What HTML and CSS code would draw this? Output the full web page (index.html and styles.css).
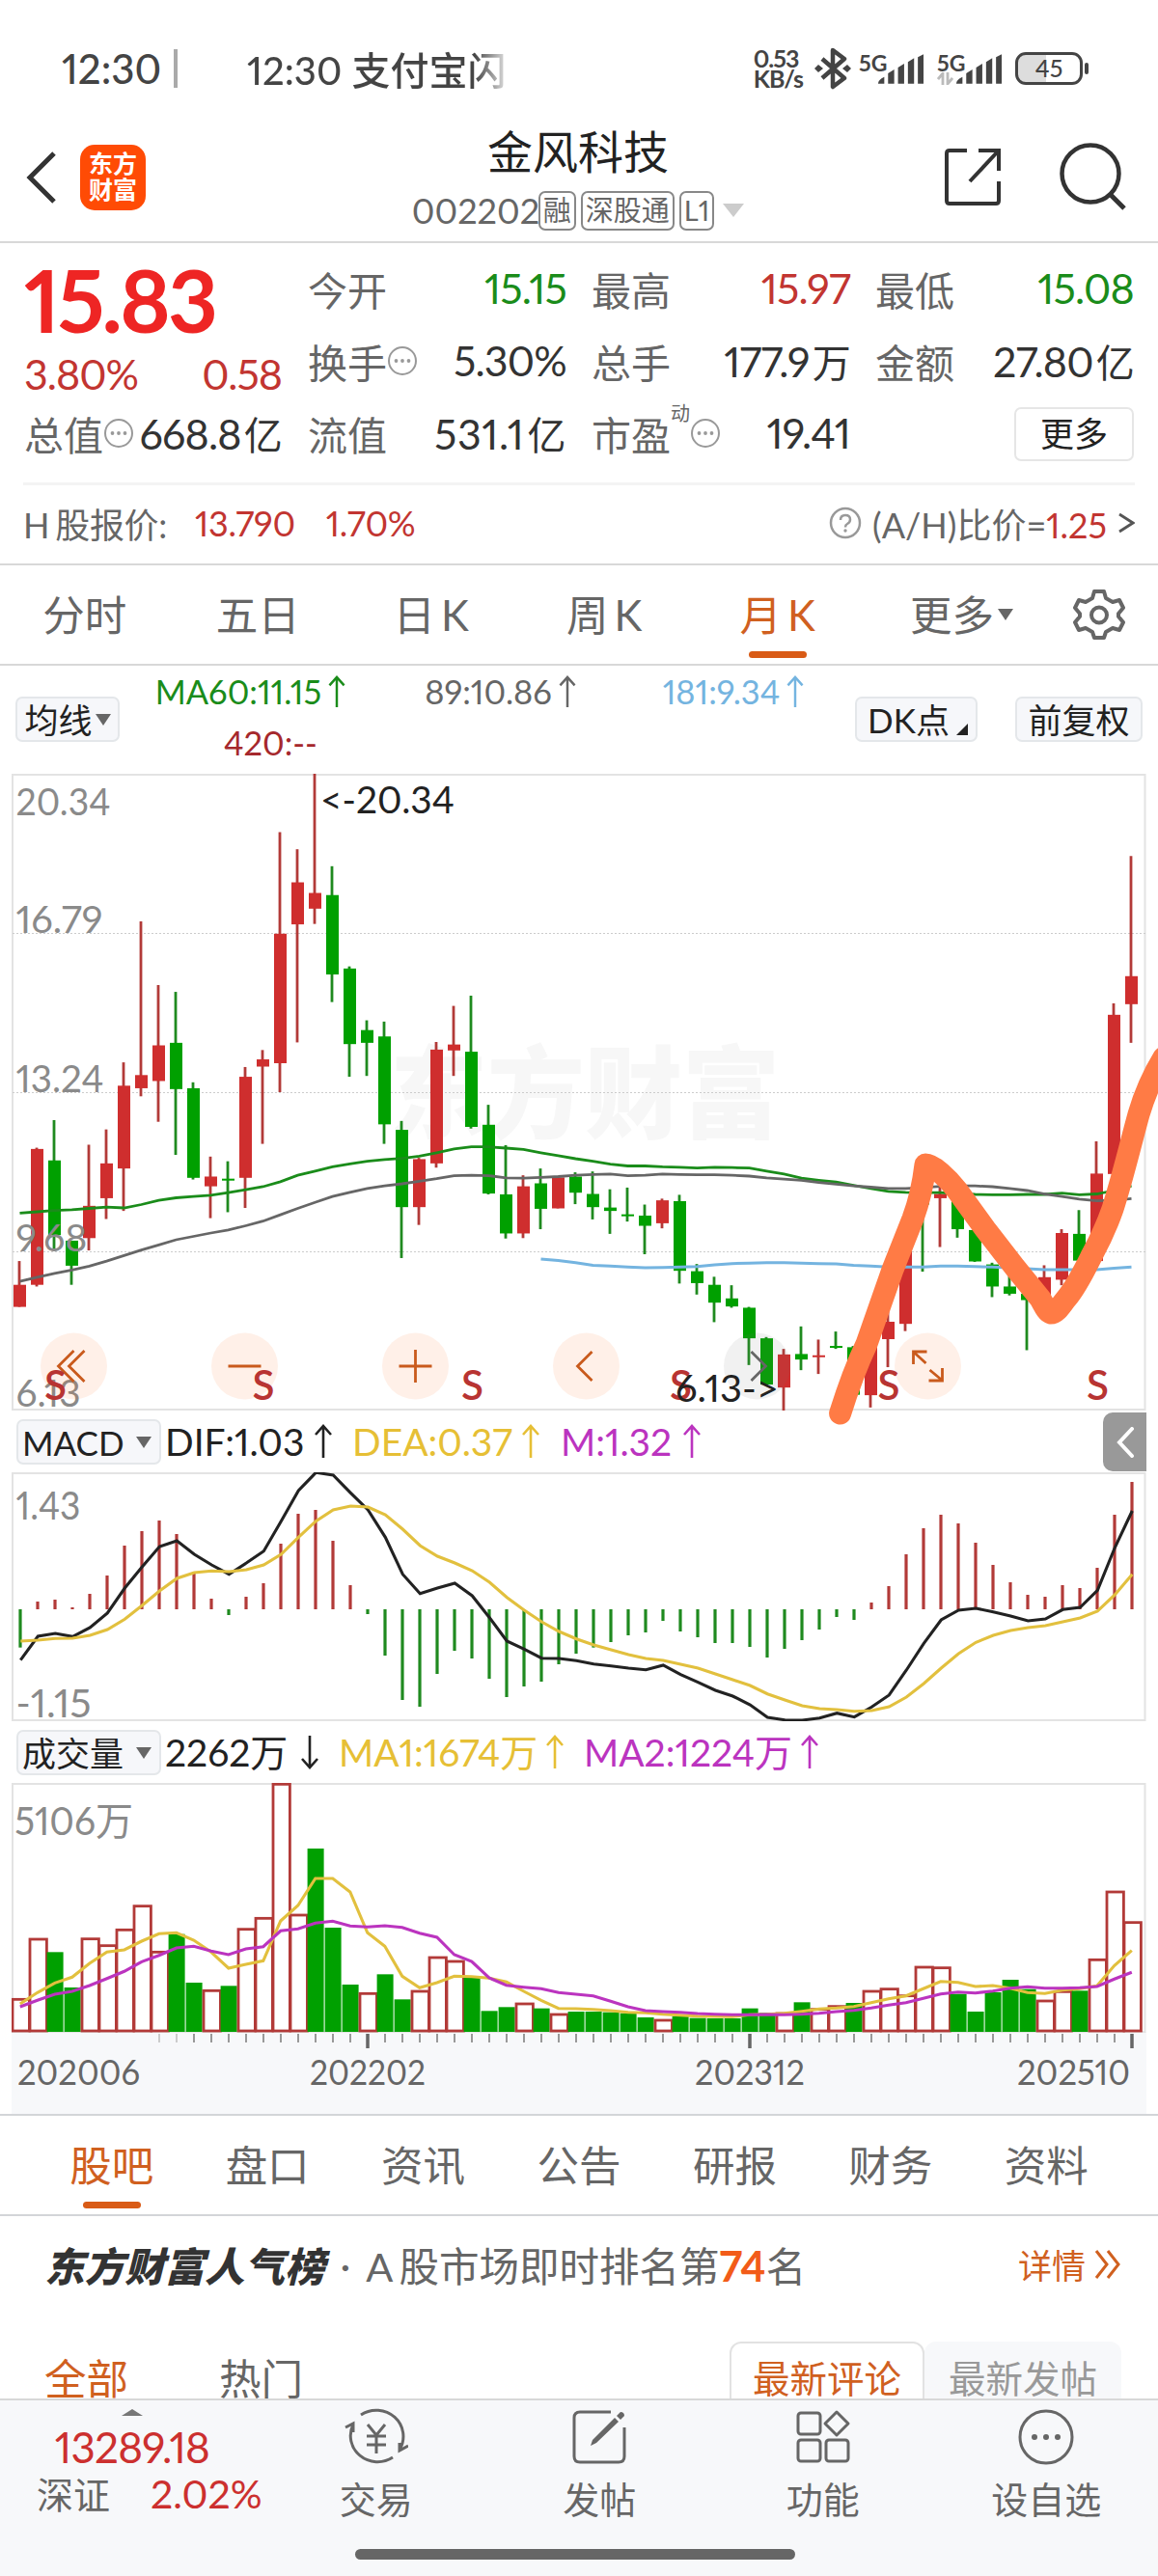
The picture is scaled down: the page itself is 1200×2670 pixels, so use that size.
FILE: index.html
```html
<!DOCTYPE html>
<html lang="zh-CN">
<head>
    <meta charset="UTF-8">
    <meta name="viewport" content="width=device-width, initial-scale=1.0">
    <title>金风科技 002202</title>
    <link rel="stylesheet" href="styles.css">
</head>
<body>

<!-- Iconos compartidos -->
<svg class="defs" width="0" height="0">
    <symbol id="up" viewBox="0 0 20 36"><path d="M10 35V2M2 11l8-9 8 9" fill="none" stroke="currentColor" stroke-width="2.6"/></symbol>
    <symbol id="down" viewBox="0 0 20 36"><path d="M10 1v33M2 25l8 9 8-9" fill="none" stroke="currentColor" stroke-width="2.6"/></symbol>
    <symbol id="dots" viewBox="0 0 32 32"><circle cx="16" cy="16" r="14" fill="none" stroke="#999" stroke-width="2"/><circle cx="9.500" cy="16" r="1.900" fill="#999"/><circle cx="16" cy="16" r="1.900" fill="#999"/><circle cx="22.500" cy="16" r="1.900" fill="#999"/></symbol>
    <symbol id="signal" viewBox="0 0 50 32"><path d="M1 31q0-4 6.500-7v7zM11.500 31V20l6.500-4v15zM22 31V14l6.500-4v21zM32.500 31V8l6.500-4v27zM43 31V3l6-3v31z" fill="#444"/></symbol>
</svg>

<div class="status">
    <span class="clock">12:30</span>
    <span class="cursor"></span>
    <span class="ticker">12:30 支付宝闪</span>
    <div class="status-right">
        <div class="speed"><span>0.53</span><span>KB/s</span></div>
        <svg class="bt" width="38" height="44" viewBox="0 0 38 44"><path d="M8 12l23 20-12 9V3l12 9L8 32" fill="none" stroke="#444" stroke-width="4.500" stroke-linejoin="round"/><path d="M0 22l4-4 5 4-5 4zM29 22l5-4 4 4-4 4z" fill="#444"/></svg>
        <div class="net"><div class="gen"><span>5G</span></div><svg width="49" height="32"><use href="#signal"/></svg></div>
        <div class="net"><div class="gen"><span>5G</span><svg width="17" height="13" viewBox="0 0 17 13"><path d="M6 13V1L1 7M11 0v12l5-6" fill="none" stroke="#bbb" stroke-width="2.800"/></svg></div><svg width="49" height="32"><use href="#signal"/></svg></div>
        <div class="battery"><span>45</span></div>
        <span class="nub"></span>
    </div>
</div>

<header class="header">
    <div class="header-left">
        <svg width="34" height="56" viewBox="0 0 34 56"><path d="M30 3L5 28l25 25" fill="none" stroke="#333" stroke-width="5"/></svg>
        <div class="logo"><span>东方</span><span>财富</span></div>
    </div>
    <div class="stock">
        <h1>金风科技</h1>
        <div class="code">
            <span class="num">002202</span>
            <span class="tag">融</span>
            <span class="tag">深股通</span>
            <span class="tag">L1</span>
            <span class="caret"></span>
        </div>
    </div>
    <div class="header-right">
        <svg width="60" height="60" viewBox="0 0 60 60"><path d="M24 3H6q-3 0-3 3v49q0 3 3 3h48q3 0 3-3V35M36 3h21v21M56 4L27 35" fill="none" stroke="#333" stroke-width="4"/></svg>
        <svg width="72" height="72" viewBox="0 0 72 72"><circle cx="34" cy="33" r="29.500" fill="none" stroke="#333" stroke-width="4.500"/><path d="M54 54l15 15" stroke="#333" stroke-width="5"/></svg>
    </div>
</header>

<section class="quote">
    <div class="price-col">
        <div class="price">15.83</div>
        <div class="change"><span>3.80%</span><span>0.58</span></div>
        <div class="cell"><label>总值</label><svg width="32" height="32"><use href="#dots"/></svg><b>668.8<i>亿</i></b></div>
    </div>
    <div class="cells">
        <div class="cell"><label>今开</label><b class="green">15.15</b></div>
        <div class="cell"><label>最高</label><b class="red">15.97</b></div>
        <div class="cell"><label>最低</label><b class="green">15.08</b></div>
        <div class="cell"><label>换手</label><svg width="32" height="32"><use href="#dots"/></svg><b>5.30%</b></div>
        <div class="cell"><label>总手</label><b>177.9<i>万</i></b></div>
        <div class="cell"><label>金额</label><b>27.80<i>亿</i></b></div>
        <div class="cell"><label>流值</label><b class="loose">531.1<i>亿</i></b></div>
        <div class="cell"><label>市盈</label><sup>动</sup><svg width="32" height="32"><use href="#dots"/></svg><b>19.41</b></div>
        <div class="cell"><button class="more">更多</button></div>
    </div>
</section>

<div class="hshare">
    <span>H<s></s>股报价:</span>
    <span class="red h-price">13.790</span>
    <span class="red">1.70%</span>
    <div class="ratio">
        <svg width="34" height="34" viewBox="0 0 34 34"><circle cx="17" cy="17" r="15" fill="none" stroke="#999" stroke-width="2.500"/><path d="M12 14q0-5 5-5t5 4.500q0 3-3 4.500-2 1-2 3.500" fill="none" stroke="#999" stroke-width="2.500"/><circle cx="17" cy="25" r="1.700" fill="#999"/></svg>
        <span>(A/H)比价=<em class="red">1.25</em></span>
        <svg width="18" height="22" viewBox="0 0 18 22"><path d="M2 2l14 9-14 9" fill="none" stroke="#555" stroke-width="2.800"/></svg>
    </div>
</div>

<nav class="periods">
    <a>分时</a><a>五日</a><a>日<s></s>K</a><a>周<s></s>K</a><a class="active">月<s></s>K</a>
    <a class="drop">更多<span class="tri"></span></a>
    <svg width="54" height="54" viewBox="0 0 54 54"><path d="M22 3h10l2 7 7 4 7-2 4 8-5 6v3l5 6-4 8-7-2-7 4-2 6H22l-2-6-7-4-7 2-4-8 5-6v-3l-5-6 4-8 7 2 7-4z" fill="none" stroke="#666" stroke-width="4" stroke-linejoin="round"/><circle cx="27" cy="27.500" r="8" fill="none" stroke="#666" stroke-width="4"/></svg>
</nav>

<div class="indicators">
    <button class="chip avg">均线<span class="tri"></span></button>
    <div class="ma-list">
        <span class="green">MA60:11.15<svg width="20" height="34"><use href="#up"/></svg></span>
        <span>89:10.86<svg width="20" height="34"><use href="#up"/></svg></span>
        <span class="blue">181:9.34<svg width="20" height="34"><use href="#up"/></svg></span>
        <span class="darkred">420:--</span>
    </div>
    <button class="chip dk">DK点<span class="corner"></span></button>
    <button class="chip adj">前复权</button>
</div>

<div class="charts">
    <svg id="kline" width="1176" height="660" viewBox="12 802 1176 660"></svg>
    <div class="legend">
        <button class="chip wide">MACD<span class="tri"></span></button>
        <span class="l1">DIF:1.03<svg width="20" height="36"><use href="#up"/></svg></span>
        <span class="l2 yellow">DEA:0.37<svg width="20" height="36"><use href="#up"/></svg></span>
        <span class="l3 purple">M:1.32<svg width="20" height="36"><use href="#up"/></svg></span>
        <div class="handle"><svg width="20" height="32" viewBox="0 0 20 32"><path d="M17 2L4 16l13 14" fill="none" stroke="#fff" stroke-width="4" stroke-linecap="round"/></svg></div>
    </div>
    <svg id="macd" width="1176" height="258" viewBox="12 1526 1176 258"></svg>
    <div class="legend">
        <button class="chip wide">成交量<span class="tri"></span></button>
        <span class="v1">2262万<svg width="20" height="36"><use href="#down"/></svg></span>
        <span class="v2 yellow">MA1:1674万<svg width="20" height="36"><use href="#up"/></svg></span>
        <span class="v3 purple">MA2:1224万<svg width="20" height="36"><use href="#up"/></svg></span>
    </div>
    <svg id="volume" width="1176" height="343" viewBox="12 1848 1176 343"></svg>
    <!-- Trazo dibujado encima del gráfico -->
    <svg class="doodle" width="350" height="440" viewBox="850 1050 350 440"><path d="M870.600 1465C880 1435 889 1412 898 1393L925 1316L946 1263C953 1244 957 1224 959 1207C967 1207 982 1221 992 1234L1021 1274L1052 1314L1078 1346C1082 1353 1085 1360 1089 1361C1095 1361 1100 1352 1105 1346C1116 1333 1124 1316 1132 1300Q1145 1276 1153 1253C1163 1222 1172 1184 1180 1155Q1189 1124 1206 1096" fill="none" stroke="#ff7b45" stroke-width="23" stroke-linecap="round" stroke-linejoin="round"/></svg>
</div>

<nav class="sections">
    <a class="active">股吧</a><a>盘口</a><a>资讯</a><a>公告</a><a>研报</a><a>财务</a><a>资料</a>
</nav>

<div class="rank">
    <strong>东方财富人气榜</strong>
    <span class="sep">·</span>
    <span>A<s></s>股市场即时排名第<em>74</em>名</span>
    <a>详情<svg width="28" height="32" viewBox="0 0 28 32"><path d="M2 2l11 14L2 30M14 2l11 14-11 14" fill="none" stroke="currentColor" stroke-width="3"/></svg></a>
</div>

<div class="feed">
    <a class="active">全部</a>
    <a>热门</a>
    <div class="sort"><span class="on">最新评论</span><span>最新发帖</span></div>
</div>

<footer class="bottom">
    <div class="index">
        <span class="arrow"></span>
        <b>13289.18</b>
        <div><span>深证</span><em>2.02%</em></div>
    </div>
    <a><svg width="66" height="60" viewBox="0 0 66 60"><g fill="none" stroke="#666" stroke-width="3"><path d="M17 7A28 27 0 0 1 57 43M50 51A28 27 0 0 1 9 17M1 20l8-4 0 9M66 39l-9 5 0-8"/><path d="M24 17l9 11 9-11M23 29h20M23 38h20M33 28v19"/></g></svg>交易</a>
    <a><svg width="60" height="60" viewBox="0 0 60 60"><path d="M42 4H10q-6 0-6 6v40q0 6 6 6h40q6 0 6-6V20" fill="none" stroke="#666" stroke-width="3"/><path d="M21 39l2-6L46 10l4 4-23 22zM48 8l4-4q4 0 4 4l-4 4z" fill="#666"/></svg>发帖</a>
    <a><svg width="60" height="60" viewBox="0 0 60 60"><g fill="none" stroke="#666" stroke-width="3"><rect x="4" y="5" width="23" height="22" rx="3"/><rect x="4" y="33" width="23" height="22" rx="3"/><rect x="33" y="33" width="23" height="22" rx="3"/><path d="M44 4l12 12-12 12-12-12z" stroke-linejoin="round"/></g></svg>功能</a>
    <a><svg width="60" height="60" viewBox="0 0 60 60"><circle cx="30" cy="30" r="27" fill="none" stroke="#666" stroke-width="3"/><g fill="#666"><circle cx="18" cy="30" r="3"/><circle cx="30" cy="30" r="3"/><circle cx="42" cy="30" r="3"/></g></svg>设自选</a>
    <div class="home"></div>
</footer>

<script src="chart.js"></script>
</body>
</html>
```

FILE: styles.css
```css
/* General */
* {
    margin: 0;
    padding: 0;
    box-sizing: border-box;
}
body {
    width: 1200px;
    height: 2670px;
    overflow: hidden;
    display: flex;
    flex-direction: column;
    font-family: Lato, "Noto Sans CJK SC", sans-serif;
    font-variant-numeric: proportional-nums;
    background-color: #fff;
    color: #666;
}
body > * {
    flex-shrink: 0;
}
svg {
    display: block;
    flex-shrink: 0;
}
.defs {
    position: absolute;
}
button {
    font-family: inherit;
    border: none;
    background: none;
}
em, i {
    font-style: normal;
}
/* espacio fino entre latinas y chino */
s {
    display: inline-block;
    width: 6px;
}
.red { color: #c23531; }
.green { color: #1a8c1a; }
.blue { color: #74b4e0; }
.darkred { color: #a5282c; }
.yellow { color: #e6bf35; }
.purple { color: #bb34bf; }
.tri {
    border: 8px solid transparent;
    border-top: 12px solid #666;
    border-bottom: 0;
}

/* Barra de estado */
.status {
    height: 130px;
    padding: 12px 72px 0 64px;
    display: flex;
    align-items: center;
    font-size: 42px;
    font-weight: 500;
    color: #444;
}
.clock {
    width: 116px;
}
.cursor {
    width: 4px;
    height: 40px;
    background: #aaa;
    margin-right: 72px;
}
.ticker {
    font-size: 40px;
    white-space: nowrap;
    background: linear-gradient(90deg, #444 88%, #ddd);
    -webkit-background-clip: text;
    color: transparent;
}
.status-right {
    margin-left: auto;
    display: flex;
    align-items: center;
}
.speed {
    display: flex;
    flex-direction: column;
    font-size: 25px;
    line-height: 21px;
    font-weight: 700;
    letter-spacing: -1px;
    margin-right: 12px;
}
.bt {
    margin-right: 8px;
}
.net {
    display: flex;
    margin-right: 13px;
    align-items: flex-end;
}
.gen {
    width: 31px;
    height: 33px;
    margin-right: -12px;
    display: flex;
    flex-direction: column;
    justify-content: space-between;
}
.gen span {
    font-size: 23px;
    line-height: 20px;
    font-weight: 700;
}
.battery {
    width: 70px;
    height: 34px;
    border: 3px solid #444;
    border-radius: 11px;
    background: linear-gradient(90deg, #ddd 45%, #fff 45%);
    font-size: 25px;
    line-height: 27px;
    text-align: center;
}
.nub {
    width: 4px;
    height: 12px;
    margin-left: 2px;
    border-radius: 2px;
    background: #444;
}

/* Cabecera */
.header {
    height: 122px;
    border-bottom: 2px solid #d8d8d8;
    display: flex;
    justify-content: space-between;
    padding: 0 32px 0 26px;
}
.header-left {
    display: flex;
    gap: 23px;
    width: 194px;
    height: 108px;
    align-items: center;
}
.logo {
    width: 68px;
    height: 68px;
    border-radius: 15px;
    background: #ff4b05;
    color: #fff;
    font-size: 25px;
    line-height: 27px;
    font-weight: 700;
    padding-top: 6px;
    display: flex;
    flex-direction: column;
    align-items: center;
}
.stock {
    display: flex;
    flex-direction: column;
    align-items: center;
}
.stock h1 {
    font-size: 47px;
    line-height: 56px;
    font-weight: 400;
    color: #222;
    margin: -1px 0 12px;
}
.code {
    display: flex;
    align-items: center;
    gap: 5px;
    height: 42px;
    font-size: 36px;
}
.code .num {
    width: 126px;
    line-height: 38px;
}
.tag {
    height: 41px;
    line-height: 36px;
    border: 2px solid #888;
    border-radius: 7px;
    padding: 0 3px;
    font-size: 29px;
}
.caret {
    border: 11px solid transparent;
    border-top: 14px solid #ccc;
    border-bottom: 0;
    margin-left: 4px;
}
.header-right {
    display: flex;
    width: 190px;
    height: 106px;
    align-items: center;
    gap: 58px;
}

/* Cotización */
.quote {
    display: flex;
    gap: 27px;
    height: 248px;
    padding: 9px 25px 0;
}
.price-col {
    width: 268px;
}
.price {
    height: 96px;
    font-size: 90px;
    line-height: 98px;
    font-weight: 700;
    color: #ee2524;
    letter-spacing: -3px;
}
.change {
    display: flex;
    justify-content: space-between;
    height: 54px;
    line-height: 62px;
    font-size: 43px;
    color: #c23531;
    letter-spacing: -1px;
}
.cells {
    flex: 1;
    display: grid;
    grid-template-columns: repeat(3, 268px);
    column-gap: 26px;
    grid-auto-rows: 75px;
}
.cell {
    display: flex;
    align-items: center;
    height: 75px;
}
.cell label {
    font-size: 41px;
}
.cell b {
    margin-left: auto;
    font-weight: 400;
    font-size: 43px;
    color: #333;
    letter-spacing: -0.8px;
}
.cell .loose {
    letter-spacing: 0.6px;
}
.cell b i {
    font-size: 40px;
    margin-left: 3px;
}
.cell .red { color: #c23531; }
.cell .green { color: #1a8c1a; }
.cell sup {
    font-size: 20px;
    align-self: flex-start;
    margin-top: 2px;
}
.more {
    margin: 2px 0 0 auto;
    width: 124px;
    height: 56px;
    border: 2px solid #e6e6e6;
    border-radius: 7px;
    font-size: 35px;
    line-height: 49px;
    color: #222;
}

/* Acción H */
.hshare {
    margin: 0 24px;
    height: 84px;
    padding-bottom: 3px;
    border-top: 3px solid #f4f4f4;
    display: flex;
    align-items: center;
    font-size: 36px;
    letter-spacing: -0.3px;
    white-space: nowrap;
}
.h-price {
    margin: 0 32px 0 29px;
}
.ratio {
    margin-left: auto;
    display: flex;
    align-items: center;
    gap: 11px;
    letter-spacing: 0;
}

/* Periodos */
.periods {
    height: 106px;
    border-top: 2px solid #d8d8d8;
    border-bottom: 2px solid #d8d8d8;
    display: flex;
    align-items: center;
    font-size: 43.5px;
}
.periods a, .sections a {
    position: relative;
    text-align: center;
    line-height: 60px;
}
.periods a {
    width: 179.500px;
    left: -2px;
}
.periods .drop {
    width: 202px;
    display: flex;
    align-items: center;
    justify-content: center;
    gap: 4px;
}
.periods svg {
    margin-left: 12px;
}
.active {
    color: #d0601f;
}
.periods .active::after, .sections .active::after {
    content: "";
    position: absolute;
    left: 50%;
    bottom: -15px;
    width: 60px;
    height: 7px;
    margin-left: -30px;
    border-radius: 4px;
    background: #d95b16;
}

/* Indicadores */
.indicators {
    height: 112px;
    padding: 0 16px;
    display: flex;
    align-items: flex-start;
}
.chip {
    display: flex;
    align-items: center;
    justify-content: center;
    gap: 3px;
    height: 47px;
    margin-top: 32px;
    padding: 0 6px;
    border: 2px solid #e4e7ea;
    border-radius: 7px;
    background: #f6f7fa;
    color: #222;
    font-size: 35px;
    line-height: 42px;
    white-space: nowrap;
}
.avg {
    width: 108px;
}
.dk {
    width: 127px;
    margin-left: 7px;
}
.adj {
    width: 132px;
    margin-left: auto;
}
.corner {
    align-self: flex-end;
    margin: 0 -3px 5px 4px;
    border-left: 12px solid transparent;
    border-bottom: 12px solid #222;
}
.ma-list {
    display: grid;
    grid-template-columns: 272px 246px 237px;
    grid-auto-rows: 53px;
    justify-items: center;
    font-size: 34.5px;
    line-height: 62px;
}
.ma-list span {
    display: flex;
    align-items: center;
    gap: 6px;
}
.ma-list .darkred {
    padding-left: 41px;
}

/* Gráficos */
.charts {
    position: relative;
    padding-left: 12px;
    height: 1389px;
}
.doodle {
    position: absolute;
    right: 0;
    top: 248px;
}
.legend {
    display: flex;
    align-items: flex-start;
    height: 64px;
    padding-left: 5px;
    font-size: 39px;
    line-height: 64px;
    color: #222;
}
.legend > span {
    display: flex;
    align-items: center;
    justify-content: space-between;
    white-space: nowrap;
}
.legend .purple { color: #bb34bf; }
.legend .yellow { color: #e6bf35; }
.legend .chip {
    width: 150px;
    justify-content: space-between;
    margin: 9px 4px 0 0;
    padding: 0 8px 0 4px;
}
.l1 { width: 174px; }
.l2 { width: 195px; margin-left: 20px; }
.l3 { width: 146px; margin-left: 21px; }
.v1 { width: 160px; }
.v2 { width: 234px; margin-left: 20px; }
.v3 { width: 244px; margin-left: 20px; }
.handle {
    margin: 2px 12px 0 auto;
    width: 45px;
    height: 61px;
    border-radius: 10px 0 0 10px;
    background: #999;
    display: flex;
    align-items: center;
    justify-content: center;
}

/* Secciones */
.sections {
    height: 106px;
    padding: 0 35px;
    border-top: 2px solid #d3d5d8;
    border-bottom: 2px solid #d3d5d8;
    display: flex;
    align-items: center;
    font-size: 43.5px;
}
.sections a {
    width: 161.500px;
}

/* Ranking */
.rank {
    height: 106px;
    padding: 0 38px 7px 46px;
    display: flex;
    align-items: center;
    font-size: 41.5px;
    white-space: nowrap;
}
.rank strong {
    font-weight: 900;
    font-style: italic;
    color: #333;
}
.rank .sep {
    margin: 0 16px;
}
.rank em {
    font-weight: 700;
    font-size: 44px;
    color: #f25c19;
}
.rank a {
    margin-left: auto;
    display: flex;
    align-items: center;
    gap: 9px;
    font-size: 35px;
    color: #d0601f;
}
.feed {
    height: 83px;
    padding: 24px 38px 0 46px;
    display: flex;
    gap: 94px;
    font-size: 43.5px;
    line-height: 76px;
    overflow: hidden;
}
.sort {
    margin-left: auto;
    display: flex;
    font-size: 38.5px;
    line-height: 72px;
}
.sort span {
    width: 204px;
    height: 90px;
    padding-top: 2px;
    border-radius: 12px 12px 0 0;
    text-align: center;
    background: #f7f8fa;
    color: #999;
}
.sort .on {
    width: 202px;
    padding-top: 0;
    border: 2px solid #e2e2e2;
    background: #fff;
    color: #d0601f;
}

/* Barra inferior */
.bottom {
    position: relative;
    height: 185px;
    border-top: 2px solid #d8d8d8;
    background: #f7f8fa;
    display: flex;
    font-size: 38px;
}
.index {
    width: 274px;
    display: flex;
    flex-direction: column;
    align-items: center;
}
.index .arrow {
    margin-top: 9px;
    border: 11px solid transparent;
    border-bottom: 7px solid #777;
    border-top: 0;
}
.index b {
    font-weight: 400;
    font-size: 44px;
    line-height: 52px;
    margin-top: 6px;
    letter-spacing: -0.8px;
    color: #cc302f;
}
.index div {
    display: flex;
    gap: 42px;
    line-height: 46px;
    padding-left: 38px;
    width: 274px;
}
.index em {
    font-size: 41px;
    color: #cc302f;
}
.bottom a {
    width: 231.500px;
    display: flex;
    flex-direction: column;
    align-items: center;
    padding-top: 8px;
    line-height: 68px;
}
.home {
    position: absolute;
    left: 368px;
    bottom: 18px;
    width: 456px;
    height: 11px;
    border-radius: 6px;
    background: #666;
}
```

FILE: chart.js
```javascript
const STEP = 18;
const RED = '#cf2e2e', GREEN = '#00a000', WICK_RED = '#b23a38', WICK_GREEN = '#1f8a1f';

// escala vertical de cada panel
const ky = v => 790 + v / 2.2725;
const my = v => 1460 + v / 3;
const vy = v => 1830 + v / 3;
const kx = i => 20.5 + i * STEP;
const mx = i => 21.3 + i * STEP;

// [máximo, cuerpo arriba, cuerpo abajo, mínimo], rojo = sube
const candles = `r1175,1231,1283,1283 r908,911,1231,1235 g843,938,1114,1148 g1127,1127,1186,1231 r901,1045,1121,1150
r865,945,1027,1076 r707,762,957,1057 r375,737,768,787 r525,667,751,847 g541,661,770,925 g754,768,979,983
r929,976,999,1074 g940,981,985,1060 r718,741,979,1050 r678,700,717,899 r165,404,709,777 r205,283,382,660
r27,308,345,381 g245,313,500,565 g481,486,664,741 g608,631,661,739 g611,646,853,899 g845,866,1048,1168
r932,935,1048,1090 r659,677,945,955 r574,665,679,739 g550,682,859,863 g807,854,1016,1018 g902,1018,1110,1122
r973,999,1110,1121 g957,992,1052,1100 r978,978,1051,1051 g966,976,1014,1041 g964,1017,1048,1077
g1006,1049,1057,1111 g1002,1065,1068,1082 g1042,1068,1092,1159 r1028,1032,1086,1098 g1019,1034,1198,1228
g1182,1199,1227,1254 g1212,1231,1273,1319 g1232,1263,1282,1285 g1283,1285,1357,1420 g1354,1357,1466,1468
r1382,1395,1473,1528 g1329,1394,1407,1432 r1360,1397,1401,1441 g1341,1375,1378,1382 g1375,1378,1490,1492
r1360,1365,1491,1520 r1294,1318,1359,1425 r1120,1130,1323,1340 g1020,1027,1042,1200 r936,1017,1027,1142
g1020,1030,1100,1120 g1095,1102,1176,1177 g1179,1183,1235,1260 g1205,1235,1252,1256 g1250,1252,1267,1385
r1185,1213,1262,1265 r1100,1109,1219,1232 g1055,1111,1174,1178 r893,969,1175,1178 r568,595,970,1000 r221,504,570,661`.split(/\s+/);

const ma60 = [1062,1059,1056,1054,1051,1048,1050,1042,1032,1026,1023,1020,1014,1007,1000,988,973,963,953,946,940,936,933,928,920,911,906,906,909,912,920,927,934,940,947,951,951,953,954,956,954,955,956,963,970,980,985,989,997,1004,1011,1013,1014,1014,1016,1018,1019,1019,1018,1018,1015,1019,1017,1009,998];
const ma89 = [1223,1213,1204,1196,1187,1175,1162,1149,1137,1125,1117,1109,1102,1092,1081,1066,1051,1037,1023,1013,1004,998,993,987,981,974,973,974,979,980,978,976,973,971,970,974,973,970,971,972,972,973,975,979,982,985,990,994,998,1001,1004,1004,1002,999,998,998,1000,1004,1009,1017,1023,1029,1033,1032,1028];
const ma181 = [1170,1174,1179,1185,1187,1189,1191,1190,1189,1188,1184,1181,1180,1179,1179,1180,1181,1182,1185,1187,1189,1189,1189,1187,1187,1188,1189,1191,1193,1195,1195,1195,1195,1192,1189];

const hist = [743,600,594,618,576,519,426,381,348,390,513,591,642,585,543,420,327,315,411,549,639,768,906,927,825,753,777,840,897,864,849,795,762,743,726,705,696,660,693,711,729,729,741,774,747,720,687,648,657,603,552,453,372,330,357,417,486,540,579,585,549,558,495,330,228];
const dif = [782,708,699,709,681,636,558,492,429,411,453,486,515,480,443,350,255,199,207,262,315,400,515,575,558,543,582,650,723,748,776,777,784,794,800,807,812,798,827,851,876,894,921,960,968,969,962,947,959,928,891,813,730,657,627,621,632,645,660,654,625,618,565,432,318];
const dea = [723,720,715,714,705,687,655,612,567,528,510,505,507,501,486,453,400,350,315,303,306,330,375,426,459,480,504,540,587,627,663,693,716,735,750,765,777,783,795,807,825,843,861,887,906,924,933,936,941,939,927,897,855,807,762,727,705,690,681,675,663,651,630,579,515];

const vol = 'r724 r537 g580 g690 r536 r557 r508 r434 r577 g524 g675 r697 g685 r506 r472 r55 r462 g258 g504 g681 r706 g649 g727 r699 r594 r606 g655 g763 g751 r738 g755 r771 g765 g765 g767 g770 g783 r789 g780 g785 g786 g786 g755 g769 r768 g736 r755 r746 g738 r699 r692 r713 r624 r626 g710 g765 g705 g666 g695 r729 r700 g700 r601 r390 r485'.split(' ');
const vma1 = [741,706,676,658,615,580,573,546,523,520,543,580,630,618,607,483,435,351,351,393,520,562,655,691,675,655,656,661,673,702,730,755,756,758,762,767,769,773,776,779,780,781,775,773,770,764,757,754,749,737,725,716,694,671,674,687,684,692,706,709,698,694,685,622,575];
const vma2 = [750,730,711,702,684,662,640,610,590,567,562,577,588,570,563,514,508,490,484,499,502,498,503,521,534,588,609,660,683,689,694,706,711,716,733,750,762,765,767,771,773,775,775,774,775,773,770,765,761,754,745,737,724,710,704,707,701,692,688,692,692,691,687,664,643];

function poly(data, x, y, color, width = 2.8, from = 0) {
    const pts = data.map((v, i) => x(i + from).toFixed(1) + ',' + y(v).toFixed(1)).join(' ');
    return `<polyline points="${pts}" fill="none" stroke="${color}" stroke-width="${width}"/>`;
}
function frame(y, h) {
    return `<rect x="13" y="${y + 1}" width="1173.5" height="${h - 2}" fill="none" stroke="#e3e3e3" stroke-width="2"/>`;
}
function line(x1, y1, x2, y2, color, width) {
    return `<line x1="${x1}" y1="${y1}" x2="${x2}" y2="${y2}" stroke="${color}" stroke-width="${width}"/>`;
}
function text(str, x, y, width, size = 39, color = '#8a8a8a', extra = '') {
    return `<text x="${x}" y="${y}" textLength="${width}" lengthAdjust="spacingAndGlyphs" font-size="${size}" fill="${color}" ${extra}>${str}</text>`;
}

function drawKline() {
    let s = text('东方财富', 404, 1172, 404, 104, '#f7f7f7', 'font-weight="900"');
    s += frame(802, 660);
    [967, 1132, 1297].forEach(y => {
        s += `<line x1="13" y1="${y}.5" x2="1187" y2="${y}.5" stroke="#ccc" stroke-dasharray="2 2"/>`;
    });
    candles.forEach((c, i) => {
        const up = c[0] === 'r';
        const [h, t, b, l] = c.slice(1).split(',').map(v => ky(+v));
        s += line(kx(i) - 0.5, h, kx(i) - 0.5, l, up ? WICK_RED : WICK_GREEN, 2.8);
        s += `<rect x="${kx(i) - 6.5}" y="${t}" width="13" height="${Math.max(b - t, 2)}" fill="${up ? RED : GREEN}"/>`;
    });
    s += poly(ma60, kx, ky, '#1a8c1a') + poly(ma89, kx, ky, '#666') + poly(ma181, kx, ky, '#74b4e0', 3, 30);

    [[844.5, '20.34', 98], [967, '16.79', 90], [1132, '13.24', 91], [1297, '9.68', 74], [1458, '6.13', 67]].forEach(([y, t, w]) => {
        s += text(t, 16.5, y, w);
    });

    // botones circulares
    const icons = [
        '<path d="M0-16L-16 0 0 16M11-16L-5 0l16 16"/>',
        '<path d="M-17 0h34"/>',
        '<path d="M-17 0h34M0-17v34"/>',
        '<path d="M6-15L-9 0 6 15"/>',
        '<path d="M-6-15L9 0-6 15"/>',
        '<path d="M-15-2v-13H-1M-14-14l12 11M15 2v13H1M14 14L2 4"/>'
    ];
    [76.5, 253.5, 430.5, 607.5, 784.5, 961.5].forEach((x, i) => {
        const off = i === 4;
        s += `<g transform="translate(${x} 1416)"><circle r="34.5" fill="${off ? 'rgba(120,120,120,.1)' : 'rgba(255,110,30,.1)'}"/>
            <g fill="none" stroke="${off ? '#666' : '#c95a1c'}" stroke-width="2.8">${icons[i]}</g></g>`;
    });
    [46, 261.5, 478, 694, 909.5, 1126].forEach(x => {
        s += text('S', x, 1451, 23, 42, '#b83432', 'font-weight="600"');
    });
    s += text('&lt;-20.34', 332, 843, 139, 39, '#222') + text('6.13-&gt;', 700, 1453, 107, 39, '#222');
    document.getElementById('kline').innerHTML = s;
}

function drawMacd() {
    let s = frame(1526, 258);
    hist.forEach((v, i) => {
        s += line(mx(i) - 0.3, my(624), mx(i) - 0.3, my(v), v < 624 ? WICK_RED : WICK_GREEN, 3.2);
    });
    s += poly(dif, mx, my, '#222', 3.1) + poly(dea, mx, my, '#e2c03e', 3.1);
    s += text('1.43', 16.5, 1575, 67, 40) + text('-1.15', 16.5, 1780, 78, 40);
    document.getElementById('macd').innerHTML = s;
}

function drawVolume() {
    let s = '<rect x="12" y="2106" width="1176" height="85" fill="#f7f8fa"/>' + frame(1848, 259);
    const base = 2105;
    vol.forEach((c, i) => {
        const y = vy(+c.slice(1)), x = mx(i) - 9.3;
        s += c[0] === 'r'
            ? `<rect x="${x + 1}" y="${y + 1}" width="17.4" height="${base - y - 1}" fill="#fff" stroke="${WICK_RED}" stroke-width="2.8"/>`
            : `<rect x="${x + 0.6}" y="${y}" width="17" height="${base - y + 1}" fill="${GREEN}"/>`;
    });
    s += poly(vma1, i => 20.8 + i * STEP, vy, '#e2c03e', 3.1) + poly(vma2, i => 20.8 + i * STEP, vy, '#bb34bf', 3.1);
    for (let i = 8; i < 65; i++) {
        const big = i === 20 || i === 42 || i === 64;
        s += line(mx(i) - 0.3, 2108, mx(i) - 0.3, big ? 2123 : 2117, i < 10 ? '#ccc' : big ? '#666' : '#999', big ? 3.5 : 2);
    }
    s += text('5106万', 15, 1902, 123, 40);
    [['202006', 18, 127], ['202202', 321, 120], ['202312', 720, 114], ['202510', 1054, 117]].forEach(([t, x, w]) => {
        s += text(t, x, 2161, w, 37, '#666');
    });
    document.getElementById('volume').innerHTML = s;
}

drawKline();
drawMacd();
drawVolume();
```
